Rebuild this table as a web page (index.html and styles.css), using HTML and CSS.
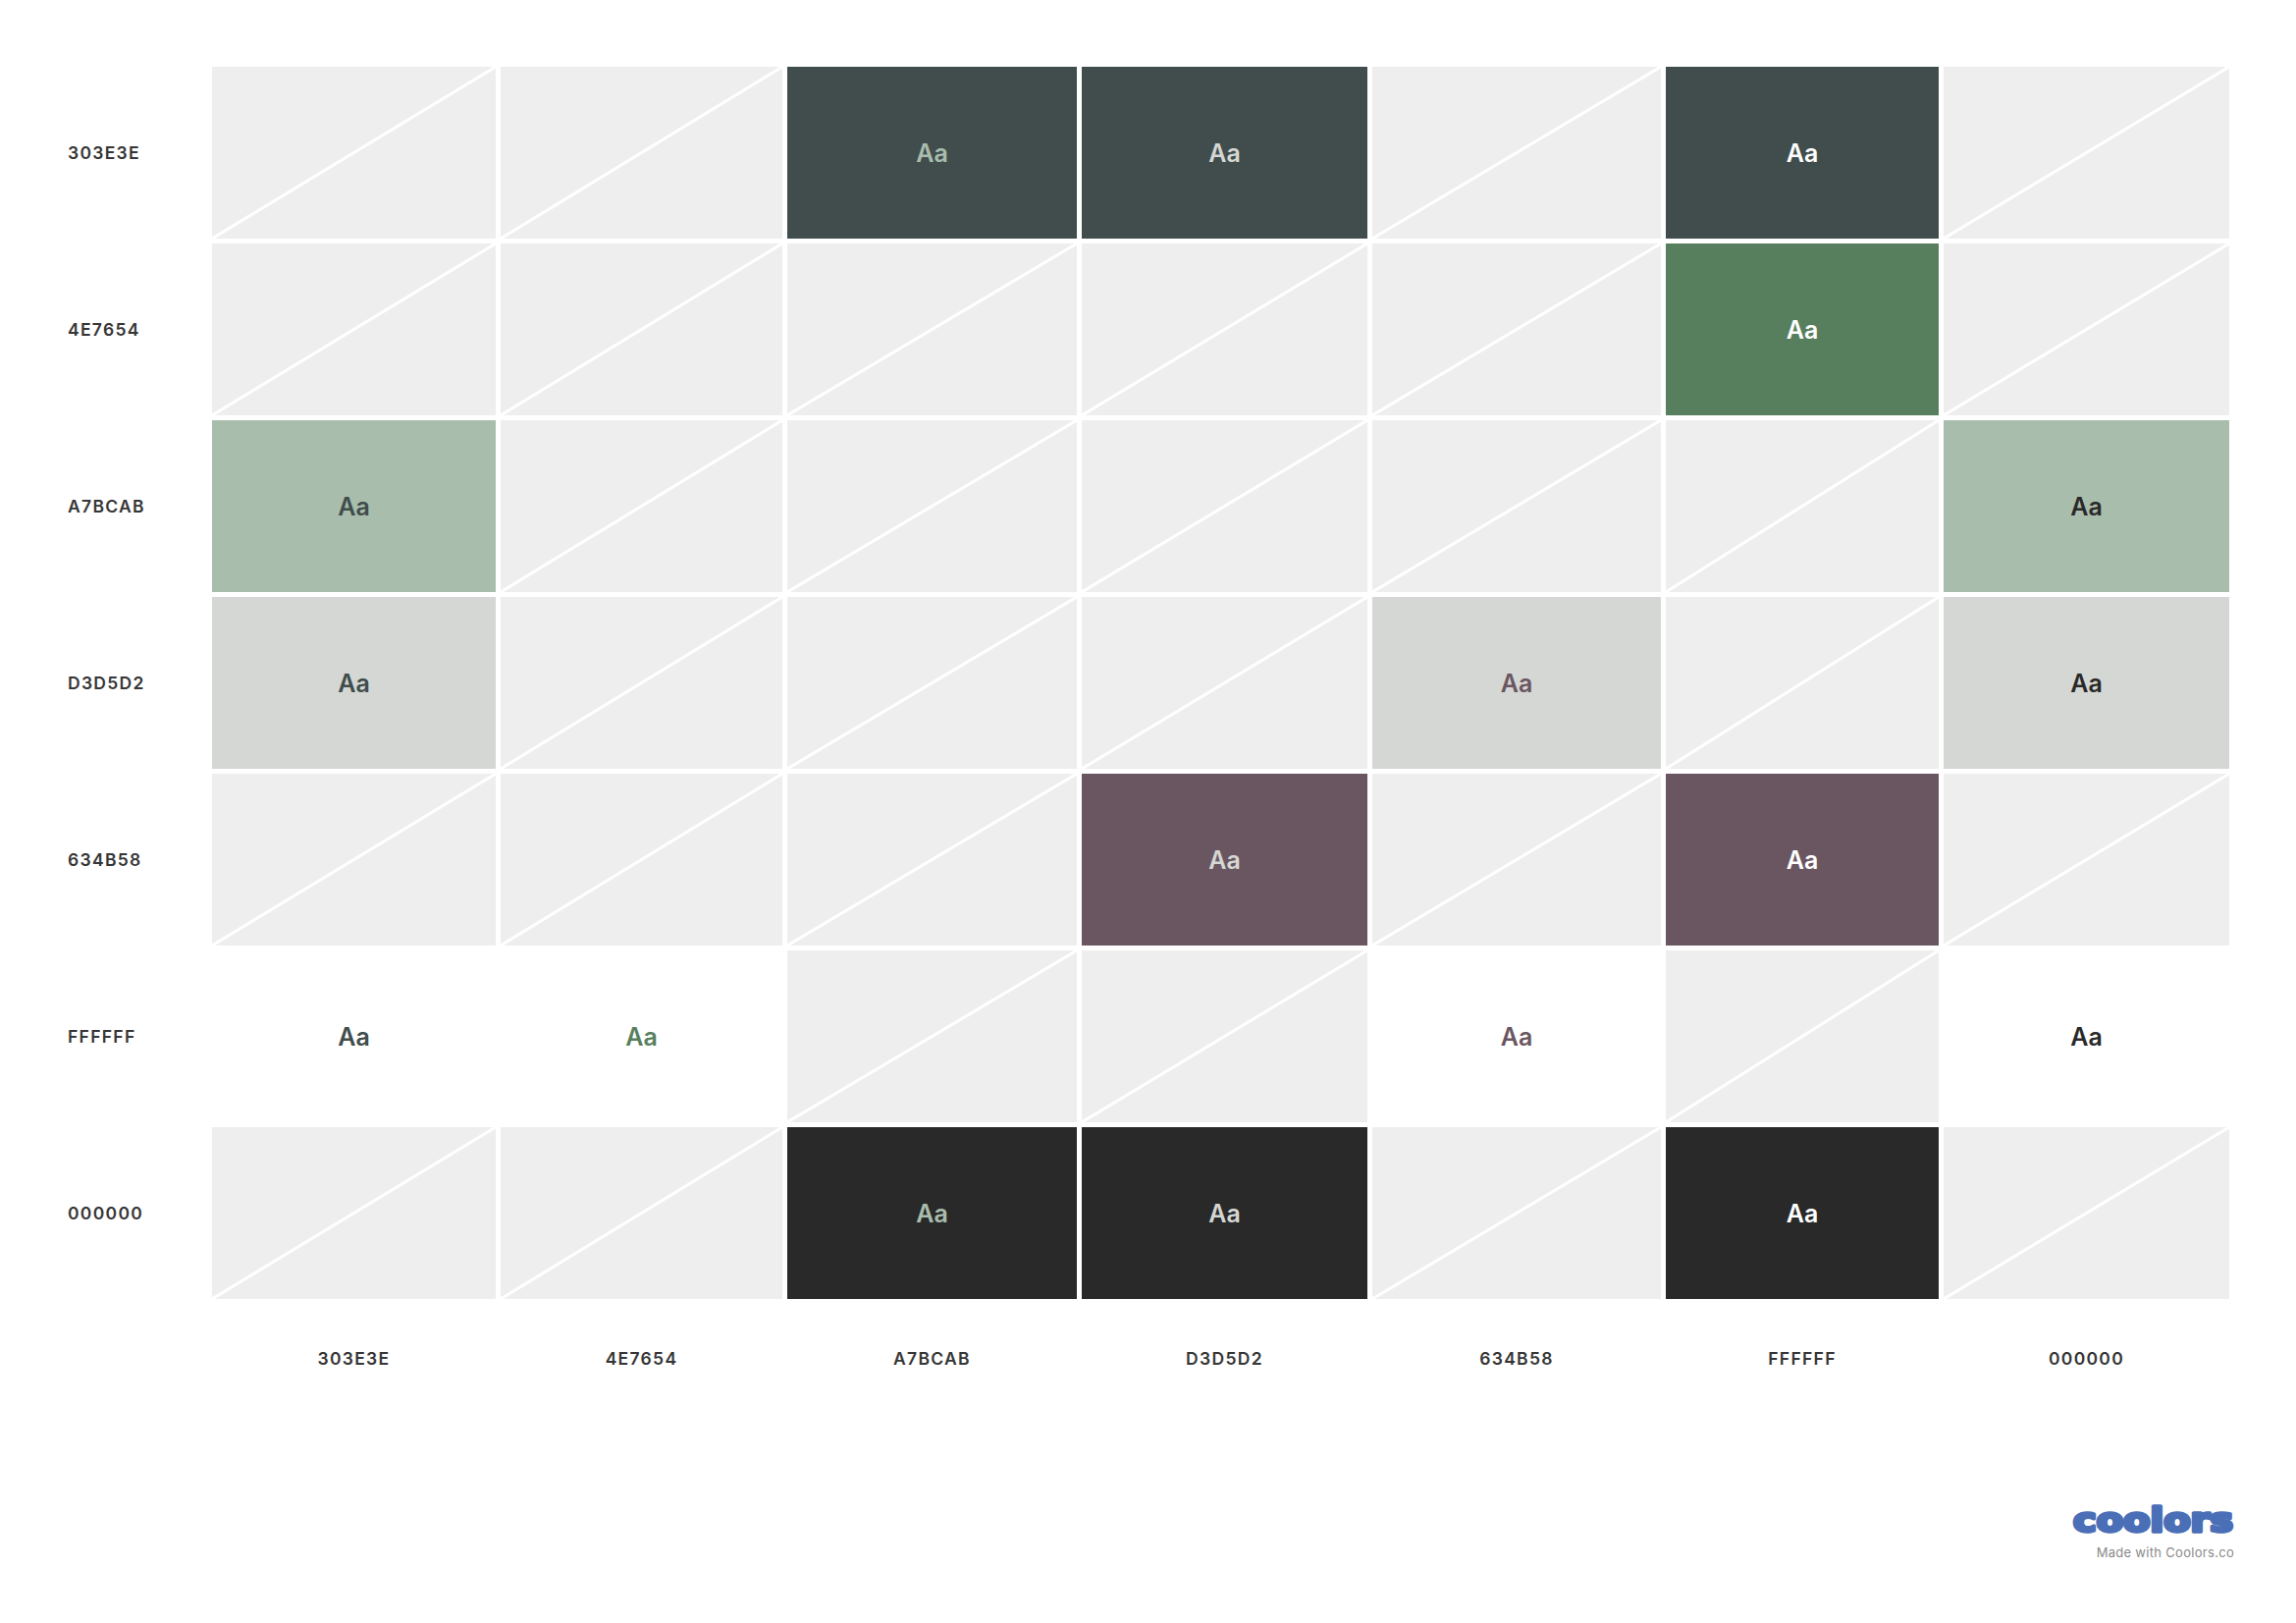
FILE: index.html
```html
<!DOCTYPE html>
<html lang="en">
<head>
<meta charset="utf-8">
<title>Coolors contrast checker</title>
<link rel="stylesheet" href="styles.css">
</head>
<body>
<main class="page">
  <div class="matrix">
    <div class="row-label">303E3E</div>
    <div class="cell empty"></div>
    <div class="cell empty"></div>
    <div class="cell bg-303e3e fg-a7bcab">Aa</div>
    <div class="cell bg-303e3e fg-d3d5d2">Aa</div>
    <div class="cell empty"></div>
    <div class="cell bg-303e3e fg-ffffff">Aa</div>
    <div class="cell empty"></div>

    <div class="row-label">4E7654</div>
    <div class="cell empty"></div>
    <div class="cell empty"></div>
    <div class="cell empty"></div>
    <div class="cell empty"></div>
    <div class="cell empty"></div>
    <div class="cell bg-4e7654 fg-ffffff">Aa</div>
    <div class="cell empty"></div>

    <div class="row-label">A7BCAB</div>
    <div class="cell bg-a7bcab fg-303e3e">Aa</div>
    <div class="cell empty"></div>
    <div class="cell empty"></div>
    <div class="cell empty"></div>
    <div class="cell empty"></div>
    <div class="cell empty"></div>
    <div class="cell bg-a7bcab fg-000000">Aa</div>

    <div class="row-label">D3D5D2</div>
    <div class="cell bg-d3d5d2 fg-303e3e">Aa</div>
    <div class="cell empty"></div>
    <div class="cell empty"></div>
    <div class="cell empty"></div>
    <div class="cell bg-d3d5d2 fg-634b58">Aa</div>
    <div class="cell empty"></div>
    <div class="cell bg-d3d5d2 fg-000000">Aa</div>

    <div class="row-label">634B58</div>
    <div class="cell empty"></div>
    <div class="cell empty"></div>
    <div class="cell empty"></div>
    <div class="cell bg-634b58 fg-d3d5d2">Aa</div>
    <div class="cell empty"></div>
    <div class="cell bg-634b58 fg-ffffff">Aa</div>
    <div class="cell empty"></div>

    <div class="row-label">FFFFFF</div>
    <div class="cell bg-ffffff fg-303e3e">Aa</div>
    <div class="cell bg-ffffff fg-4e7654">Aa</div>
    <div class="cell empty"></div>
    <div class="cell empty"></div>
    <div class="cell bg-ffffff fg-634b58">Aa</div>
    <div class="cell empty"></div>
    <div class="cell bg-ffffff fg-000000">Aa</div>

    <div class="row-label">000000</div>
    <div class="cell empty"></div>
    <div class="cell empty"></div>
    <div class="cell bg-000000 fg-a7bcab">Aa</div>
    <div class="cell bg-000000 fg-d3d5d2">Aa</div>
    <div class="cell empty"></div>
    <div class="cell bg-000000 fg-ffffff">Aa</div>
    <div class="cell empty"></div>

    <div class="corner"></div>
    <div class="col-label">303E3E</div>
    <div class="col-label">4E7654</div>
    <div class="col-label">A7BCAB</div>
    <div class="col-label">D3D5D2</div>
    <div class="col-label">634B58</div>
    <div class="col-label">FFFFFF</div>
    <div class="col-label">000000</div>
  </div>

  <footer class="brand">
    <svg class="logo" width="170" height="30" viewBox="0 0 170 30" aria-label="coolors">
      <text x="3" y="27.5" textLength="163" lengthAdjust="spacingAndGlyphs">coolors</text>
    </svg>
    <div class="made-with">Made with Coolors.co</div>
  </footer>
</main>
</body>
</html>
```

FILE: styles.css
```css
html, body {
  margin: 0;
  padding: 0;
  background: #ffffff;
}

body {
  font-family: "Inter", "Noto Sans", "Liberation Sans", sans-serif;
  color: #363636;
}

.page {
  padding: 68px 0 0 69px;
}

.matrix {
  display: grid;
  grid-template-columns: 142px 289px 287px 295px 291px 294px 278px 291px;
  grid-template-rows: repeat(7, 175px) 110px;
  gap: 5px;
}

.row-label {
  display: flex;
  align-items: center;
  font-size: 17.5px;
  font-weight: 600;
  letter-spacing: 1.3px;
  color: #363636;
}

.col-label {
  display: flex;
  align-items: center;
  justify-content: center;
  font-size: 17.5px;
  font-weight: 600;
  letter-spacing: 1.3px;
  color: #363636;
}

.cell {
  display: flex;
  align-items: center;
  justify-content: center;
  font-size: 25px;
  font-weight: 600;
}

.empty {
  background: linear-gradient(to bottom right,
    #eeeeee calc(50% - 2px),
    #ffffff calc(50% - 1px),
    #ffffff calc(50% + 1px),
    #eeeeee calc(50% + 2px));
}

/* background colours */
.bg-303e3e { background: #404d4c; }
.bg-4e7654 { background: #577f5e; }
.bg-a7bcab { background: #a9bdad; }
.bg-d3d5d2 { background: #d5d7d4; }
.bg-634b58 { background: #6a5661; }
.bg-ffffff { background: #ffffff; }
.bg-000000 { background: #292929; }

/* text colours */
.fg-303e3e { color: #404d4c; }
.fg-4e7654 { color: #577f5e; }
.fg-a7bcab { color: #a9bdad; }
.fg-d3d5d2 { color: #d5d7d4; }
.fg-634b58 { color: #6a5661; }
.fg-ffffff { color: #ffffff; }
.fg-000000 { color: #292929; }

.brand {
  display: flex;
  flex-direction: column;
  align-items: flex-end;
  margin-top: 94px;
  padding-right: 60px;
}

.logo {
  display: block;
  overflow: visible;
}

.logo text {
  font-family: "DejaVu Sans", "Liberation Sans", sans-serif;
  font-weight: 700;
  font-size: 33px;
  fill: #4b6fb6;
  stroke: #4b6fb6;
  stroke-width: 3.5px;
  stroke-linejoin: round;
  stroke-linecap: round;
}

.made-with {
  margin-top: 11px;
  margin-right: 3px;
  font-size: 13px;
  line-height: 16px;
  letter-spacing: 0.3px;
  color: #8a8a8a;
}
```
